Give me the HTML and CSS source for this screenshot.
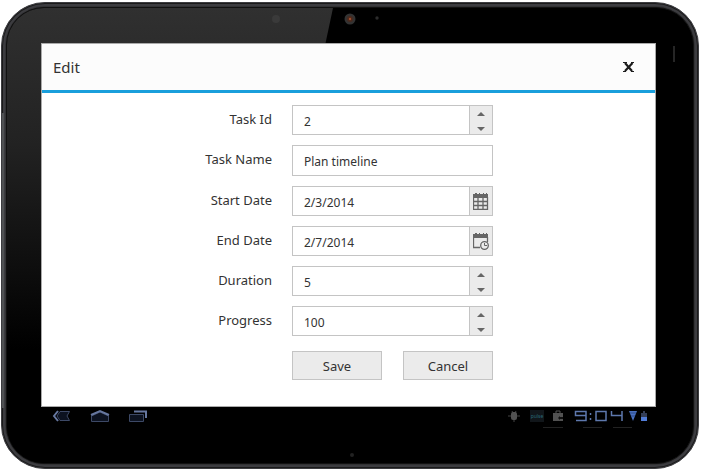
FILE: index.html
```html
<!DOCTYPE html>
<html lang="en">
<head>
<meta charset="utf-8">
<title>Edit task</title>
<link rel="stylesheet" href="styles.css">
</head>
<body>
<div class="tablet">
  <div class="bezel">
    <svg class="camera" viewBox="0 0 110 20" width="110" height="20" aria-hidden="true">
      <circle cx="4" cy="10" r="4" fill="#3a3a3a"/>
      <circle cx="78" cy="10" r="5.500" fill="#333"/><circle cx="78" cy="10" r="3" fill="#4a2a1e"/><circle cx="78" cy="10" r="1.200" fill="#a04a2a"/>
      <circle cx="105" cy="9" r="1.700" fill="#2c2c2c"/>
    </svg>
    <span class="sensor"></span>
    <main class="screen">
      <header class="header">
        <h1 class="title">Edit</h1>
        <button class="close" type="button" aria-label="Close">
          <svg viewBox="0 0 12 10" width="12" height="10"><path d="M2 1l7 8M9.500 1L2 9" fill="none" stroke="#1c1c1c" stroke-width="2.200"/><path d="M0 0h4v1H0zM8 0h3v1H8zM0 9h3v1H0zM8 9h3v1H8z" fill="#1c1c1c"/></svg>
        </button>
      </header>
      <form class="form">
        <div class="row">
          <label for="task-id">Task Id</label>
          <div class="field"><input id="task-id" type="text" value="2">
            <div class="spin"><button type="button" aria-label="Increase task id"><svg viewBox="0 0 8 4" width="8" height="4"><path d="M0 4L4 0l4 4z"/></svg></button><button type="button" aria-label="Decrease task id"><svg viewBox="0 0 8 4" width="8" height="4"><path d="M0 0l4 4 4-4z"/></svg></button></div>
          </div>
        </div>
        <div class="row">
          <label for="task-name">Task Name</label>
          <div class="field field-text"><input id="task-name" type="text" value="Plan timeline"></div>
        </div>
        <div class="row">
          <label for="start">Start Date</label>
          <div class="field"><input id="start" type="text" value="2/3/2014">
            <button class="picker" type="button" aria-label="Choose start date">
              <svg viewBox="0 0 16 17" width="16" height="17"><path d="M0 1h2V0h2v1h2V0h1v1h3V0h1v1h2V0h1v1h1v4H0z" fill="#666"/><path d="M.5 4v12.500h14V4M0 8.500h15M0 12.500h15M5 5v11M10 5v11" fill="none" stroke="#666" stroke-width="1.300"/></svg>
            </button>
          </div>
        </div>
        <div class="row">
          <label for="end">End Date</label>
          <div class="field"><input id="end" type="text" value="2/7/2014">
            <button class="picker" type="button" aria-label="Choose end date">
              <svg viewBox="0 0 16 17" width="16" height="17"><path d="M0 1h2V0h2v1h2V0h1v1h3V0h1v1h2V0h1v1h1v4H0z" fill="#666"/><path d="M.5 4v10.500H7M14.500 4v5" fill="none" stroke="#666" stroke-width="1.300"/><circle cx="11.500" cy="12.500" r="3.800" fill="#ebebeb" stroke="#666" stroke-width="1.300"/><path d="M11.500 10v2.500H14" fill="none" stroke="#666"/></svg>
            </button>
          </div>
        </div>
        <div class="row">
          <label for="duration">Duration</label>
          <div class="field"><input id="duration" type="text" value="5">
            <div class="spin"><button type="button" aria-label="Increase duration"><svg viewBox="0 0 8 4" width="8" height="4"><path d="M0 4L4 0l4 4z"/></svg></button><button type="button" aria-label="Decrease duration"><svg viewBox="0 0 8 4" width="8" height="4"><path d="M0 0l4 4 4-4z"/></svg></button></div>
          </div>
        </div>
        <div class="row">
          <label for="progress">Progress</label>
          <div class="field"><input id="progress" type="text" value="100">
            <div class="spin"><button type="button" aria-label="Increase progress"><svg viewBox="0 0 8 4" width="8" height="4"><path d="M0 4L4 0l4 4z"/></svg></button><button type="button" aria-label="Decrease progress"><svg viewBox="0 0 8 4" width="8" height="4"><path d="M0 0l4 4 4-4z"/></svg></button></div>
          </div>
        </div>
        <div class="row actions">
          <div class="buttons"><button type="button">Save</button><button type="button">Cancel</button></div>
        </div>
      </form>
    </main>
    <footer class="system">
      <nav class="nav">
        <button type="button" aria-label="Back"><svg viewBox="0 0 20 14" width="20" height="14"><path class="body" d="M8 2.500h9.500L15 7l2.500 4.500H8L5 7z"/><path class="edge" d="M6 2L2 7l4 5"/></svg></button>
        <button type="button" aria-label="Home"><svg viewBox="0 0 20 14" width="20" height="14"><path class="body" d="M1.500 7L10 3l8.500 4v5.500h-17z"/><path class="edge" d="M1 6l9-4 9 4"/></svg></button>
        <button type="button" aria-label="Recent apps"><svg viewBox="0 0 20 14" width="20" height="14"><path class="edge" d="M6 2.500h12V9"/><path class="body" d="M1.500 5.500h14v7h-14z"/></svg></button>
      </nav>
      <div class="status">
        <svg viewBox="0 0 12 12" width="12" height="12"><path d="M0 6h12M4 1l1 2M8 1L7 3M6 9v3" stroke="#454545"/><rect x="3" y="2" width="6" height="8" rx="2" fill="#525252"/></svg>
        <span class="pulse">pulse</span>
        <svg viewBox="0 0 12 12" width="12" height="12"><path d="M4 4V1h4v3" fill="none" stroke="#555"/><path d="M1 3h10v8H1z" fill="#525252"/><path d="M6 8l2-2v1h3v2H8v1z" fill="#111"/></svg>
        <svg role="img" aria-label="9:04" viewBox="0 0 50 12" width="50" height="12"><path d="M12 5.500H1.500V1.500h10.500v9H2M16.500 3v2M16.500 8v2M22 1.500h10v9h-10zM37.500 1v4.500h10M48 1v10" fill="none" stroke="#5e78ad" stroke-width="1.500"/></svg>
        <svg viewBox="0 0 20 12" width="20" height="12"><path d="M1 1h8L5 11z" fill="#4a70bd"/><path d="M2 3h6M3 6h4" stroke="#2c4a88"/><path d="M15 1h2v2h2v8h-6V3h2z" fill="#333e58"/><path d="M13 7h6v4h-6z" fill="#527dd8"/></svg>
      </div>
      <svg class="ticks" viewBox="0 0 90 1" width="90" height="1" aria-hidden="true"><path d="M0 0h20v1H0zM40 0h19v1H40zM70 0h19v1H70z" fill="#222"/></svg>
    </footer>
    <span class="port"></span>
  </div>
</div>
</body>
</html>
```
FILE: styles.css
```css
* { box-sizing: border-box; }
body { margin: 0; background: #fff; font-family: "Noto Sans", sans-serif; font-size: 13px; color: #333; }
button { margin: 0; padding: 0; border: 0; background: none; font: inherit; color: inherit; }
svg { display: block; }
.tablet { position: relative; margin: 2px 2px 0 1px; padding: 4px; border-radius: 44px; background: #323234; border: 1px solid #3c3c40; box-shadow: inset 0 0 0 1px #1b1b1b, inset 0 0 0 3px #3c3c40; }
/* volume rail on the left edge */
.tablet::before { content: ""; position: absolute; left: 0; top: 110px; bottom: 60px; width: 2px; background: #505254; }
.bezel { position: relative; padding: 35px 37px 0 34px; border-radius: 38px; border: 1px solid #111; background: #000; overflow: hidden; }
.bezel::before { content: ""; position: absolute; inset: 0; background: linear-gradient(#303030, #222 30%, #000 75%); clip-path: polygon(0 0, 326px 0, 229px 100%, 0 100%); }
.camera { position: absolute; left: 265px; top: 1px; }
.sensor { position: absolute; right: 18px; top: 38px; width: 2px; height: 16px; background: #262626; }
.port { position: absolute; left: 50%; bottom: 6px; width: 4px; height: 4px; border-radius: 50%; background: #222; }
.screen { position: relative; border: 1px solid #aaa; background: #fff; }
.header { display: flex; align-items: center; justify-content: space-between; height: 49px; padding: 0 20px 0 11px; background: #fcfcfc; border-bottom: 3px solid #199fdc; }
.title { margin: 0; font-size: 15px; font-weight: 400; line-height: 22px; }
.form { display: flex; flex-direction: column; gap: 10px; padding: 12px 0 26px; }
.row { display: grid; grid-template-columns: 230px 201px; column-gap: 20px; }
.row label { text-align: right; line-height: 28px; }
.field { display: flex; height: 30px; border: 1px solid #c4c4c4; }
.field-text { height: 31px; }
.field input { flex: 1; min-width: 0; padding: 2px 11px 0; border: 0; background: #fff; font: inherit; font-size: 12px; color: #333; outline: 0; }
.spin, .picker { width: 23px; border-left: 1px solid #c4c4c4; background: #ebebeb; display: flex; align-items: center; justify-content: center; }
.spin { flex-direction: column; justify-content: space-between; padding: 6px 0 3px; }
.spin button { width: 100%; display: flex; justify-content: center; }
.spin path { fill: #666; }
.actions { margin-top: 5px; }
.buttons { grid-column: 2; display: flex; justify-content: space-between; }
.buttons button { width: 90px; height: 29px; border: 1px solid #c4c4c4; background: #ebebeb; }
.system { position: relative; display: flex; justify-content: space-between; height: 56px; padding: 2px 8px 0 11px; }
.nav { display: flex; gap: 18px; height: 14px; }
.nav .body { fill: #0c1220; stroke: #3d4966; }
.nav .edge { fill: none; stroke: #66779f; stroke-width: 2px; }
.status { display: flex; align-items: center; gap: 8px; height: 14px; }
.status svg:nth-of-type(-n+2) { margin-right: 2px; }
.status svg:last-child { margin-left: -4px; }
.pulse { width: 14px; background: #11161a; color: #286878; font-size: 5px; line-height: 12px; text-align: center; }
.ticks { position: absolute; right: 23px; top: 20px; }
```
